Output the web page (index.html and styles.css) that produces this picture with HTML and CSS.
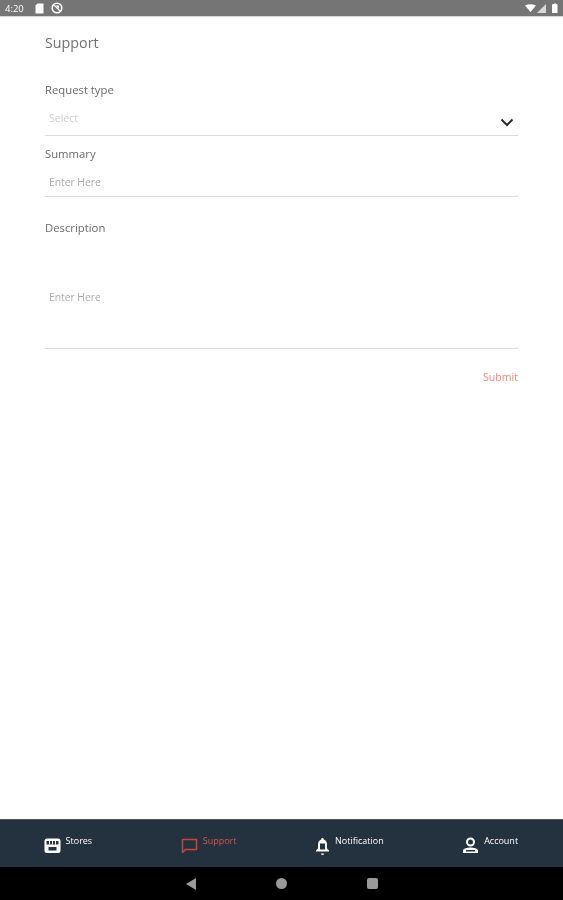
FILE: index.html
```html
<!DOCTYPE html>
<html lang="en">
<head>
  <meta charset="UTF-8" />
  <meta name="viewport" content="width=device-width, initial-scale=1.0" />
  <title>Support</title>
  <link rel="stylesheet" href="styles.css">
</head>
<body>
  <!-- status bar -->
  <div class="status-bar">
    <div class="status-left">
      <span class="clock">4:20</span>
      <svg class="status-icon" width="9" height="11" viewBox="0 0 9 11"><path d="M2.500 0.500h6v10H0.500V2.500z" fill="#fff"/></svg>
      <svg class="status-icon" width="12" height="12" viewBox="0 0 12 12"><circle cx="6" cy="6" r="4.800" fill="none" stroke="#fff" stroke-width="1.600"/><path d="M2.800 2.800l6.400 6.400" stroke="#fff" stroke-width="1.200"/><path d="M4.500 3.500h3.500v3.500z" fill="#fff"/></svg>
    </div>
    <div class="status-right">
      <svg width="11" height="8" viewBox="0 0 11 8"><path d="M0 1.500Q5.500-1 11 1.500L5.500 8z" fill="#fff"/></svg>
      <svg width="9" height="9" viewBox="0 0 9 9"><path d="M9 0v9H0z" fill="#d8d8d8"/></svg>
      <svg class="battery" width="6" height="10" viewBox="0 0 6 10"><path d="M1.500 1h1V0h1v1h1q1 0 1 1v8H0V2q0-1 1.500-1z" fill="#fff"/></svg>
    </div>
  </div>

  <main class="content">
    <h1 class="page-title">Support</h1>

    <div class="field field-type">
      <label class="field-label">Request type</label>
      <div class="input-line select-line">
        <span class="select-text">Select</span>
        <svg class="chevron" width="14" height="9" viewBox="0 0 14 9"><path d="M1.500 1.500L7 7l5.500-5.500" fill="none" stroke="#2b2b2b" stroke-width="2"/></svg>
      </div>
    </div>

    <div class="field field-summary">
      <label class="field-label">Summary</label>
      <div class="input-line summary-line">
        <span class="placeholder">Enter Here</span>
      </div>
    </div>

    <div class="field field-description">
      <label class="field-label">Description</label>
      <div class="input-line description-line">
        <span class="placeholder">Enter Here</span>
      </div>
    </div>

    <div class="submit-row"><span class="submit">Submit</span></div>
  </main>

  <!-- bottom tabs -->
  <nav class="tab-bar">
    <div class="tab tab-stores">
      <svg width="17" height="17" viewBox="0 0 17 17"><rect x="0.500" y="1.500" width="16" height="14.500" rx="2.500" fill="#fff"/><path d="M2.500 4h12v3.500h-12z" fill="#243240"/><path d="M5.500 4v3.500M8.500 4v3.500M11.500 4v3.500" stroke="#fff" stroke-width="1"/><rect x="4.500" y="10" width="8" height="3.500" fill="#243240"/></svg>
      <span class="tab-label">Stores</span>
    </div>
    <div class="tab tab-support active">
      <svg width="17" height="17" viewBox="0 0 17 17"><path d="M1.500 2.500h14v10H4.500L1.500 15.500z" fill="none" stroke="#c9443a" stroke-width="1.500" stroke-linejoin="round"/></svg>
      <span class="tab-label">Support</span>
    </div>
    <div class="tab tab-notify">
      <svg width="15" height="18" viewBox="0 0 15 18"><path d="M7.500 1a1.200 1.200 0 0 1 1.200 1.500c2.300.7 3.300 2.700 3.300 5v4l2 2v1H1v-1l2-2v-4c0-2.300 1-4.300 3.300-5A1.200 1.200 0 0 1 7.500 1z" fill="#fff"/><path d="M5 6.500h5v6H5z" fill="#243240"/><path d="M6 16.500h3a1.500 1.500 0 0 1-3 0z" fill="#fff"/></svg>
      <span class="tab-label">Notification</span>
    </div>
    <div class="tab tab-account">
      <svg width="17" height="17" viewBox="0 0 17 17"><circle cx="8.500" cy="5" r="3.500" fill="none" stroke="#fff" stroke-width="2"/><path d="M1 16v-2.500c0-2 4.500-3 7.500-3s7.500 1 7.500 3V16z" fill="#fff"/><rect x="4" y="13" width="9" height="1.500" fill="#243240"/></svg>
      <span class="tab-label">Account</span>
    </div>
  </nav>

  <!-- android buttons -->
  <div class="system-bar">
    <svg width="10" height="12" viewBox="0 0 10 12"><path d="M10 0v12L0 6z" fill="#9a9a9a"/></svg>
    <span class="sys-dot"></span>
    <span class="sys-square"></span>
  </div>
</body>
</html>
```

FILE: styles.css
```css
body {
  margin: 0;
  padding: 0;
  height: 900px;
  display: flex;
  flex-direction: column;
  font-family: "Open Sans", Arial, sans-serif;
  background: #fff;
  overflow: hidden;
}
/* the source is a soft upscaled capture */
.status-left,
.status-right,
.content,
.tab,
.system-bar {
  filter: blur(0.45px);
}
.status-bar {
  height: 16px;
  flex: none;
  display: flex;
  justify-content: space-between;
  align-items: center;
  padding: 0 5px;
  background: #757575;
  box-shadow: 0 1px 1px rgba(0, 0, 0, 0.15);
}
.status-left,
.status-right {
  display: flex;
  align-items: center;
}
.status-left {
  gap: 7px;
}
.status-right {
  gap: 1px;
}
.battery {
  margin-left: 5px;
}
.clock {
  color: #fff;
  font-size: 9.500px;
  width: 23px;
}
.content {
  flex: 1;
  padding: 0 45px;
  color: #666;
}
.page-title {
  margin: 18px 0 0;
  height: 18px;
  line-height: 18px;
  font-size: 14.300px;
  font-weight: 400;
  color: #707070;
}
.field-label {
  display: block;
  height: 16px;
  line-height: 16px;
  font-size: 11.300px;
  color: #6a6a6a;
}
.field-type {
  margin-top: 30px;
}
.field-summary {
  margin-top: 10px;
}
.field-description {
  margin-top: 23px;
}
.input-line {
  position: relative;
  border-bottom: 1px solid #dcdcdc;
  padding-left: 4px;
}
.select-line {
  height: 37px;
  line-height: 36px;
}
.summary-line {
  height: 34px;
  line-height: 36px;
}
.description-line {
  height: 112px;
  line-height: 118px;
}
.select-text {
  font-size: 10.500px;
  color: #cdcdcd;
}
.placeholder {
  font-size: 10.300px;
  color: #ababab;
}
.chevron {
  position: absolute;
  right: 4px;
  top: 20px;
}
.submit-row {
  display: flex;
  justify-content: flex-end;
  margin-top: 21px;
}
.submit {
  font-size: 10.600px;
  color: #f9837c;
}
.tab-bar {
  height: 48px;
  flex: none;
  display: flex;
  background: #243240;
  border-top: 1px solid #555;
  box-sizing: border-box;
}
.tab {
  flex: 1 1 0;
  display: flex;
  justify-content: center;
  align-items: flex-start;
  gap: 5px;
  padding: 17px 5px 0 0;
  color: #fff;
}
.tab-label {
  font-size: 9px;
  line-height: 11px;
  margin-top: -2px;
}
.tab.active .tab-label {
  color: #d9534a;
}
.system-bar {
  height: 33px;
  flex: none;
  display: flex;
  justify-content: center;
  align-items: center;
  gap: 80px;
  background: #000;
}
.sys-dot {
  width: 11px;
  height: 11px;
  border-radius: 50%;
  background: #9a9a9a;
}
.sys-square {
  width: 11px;
  height: 11px;
  border-radius: 2px;
  background: #9a9a9a;
}
```
